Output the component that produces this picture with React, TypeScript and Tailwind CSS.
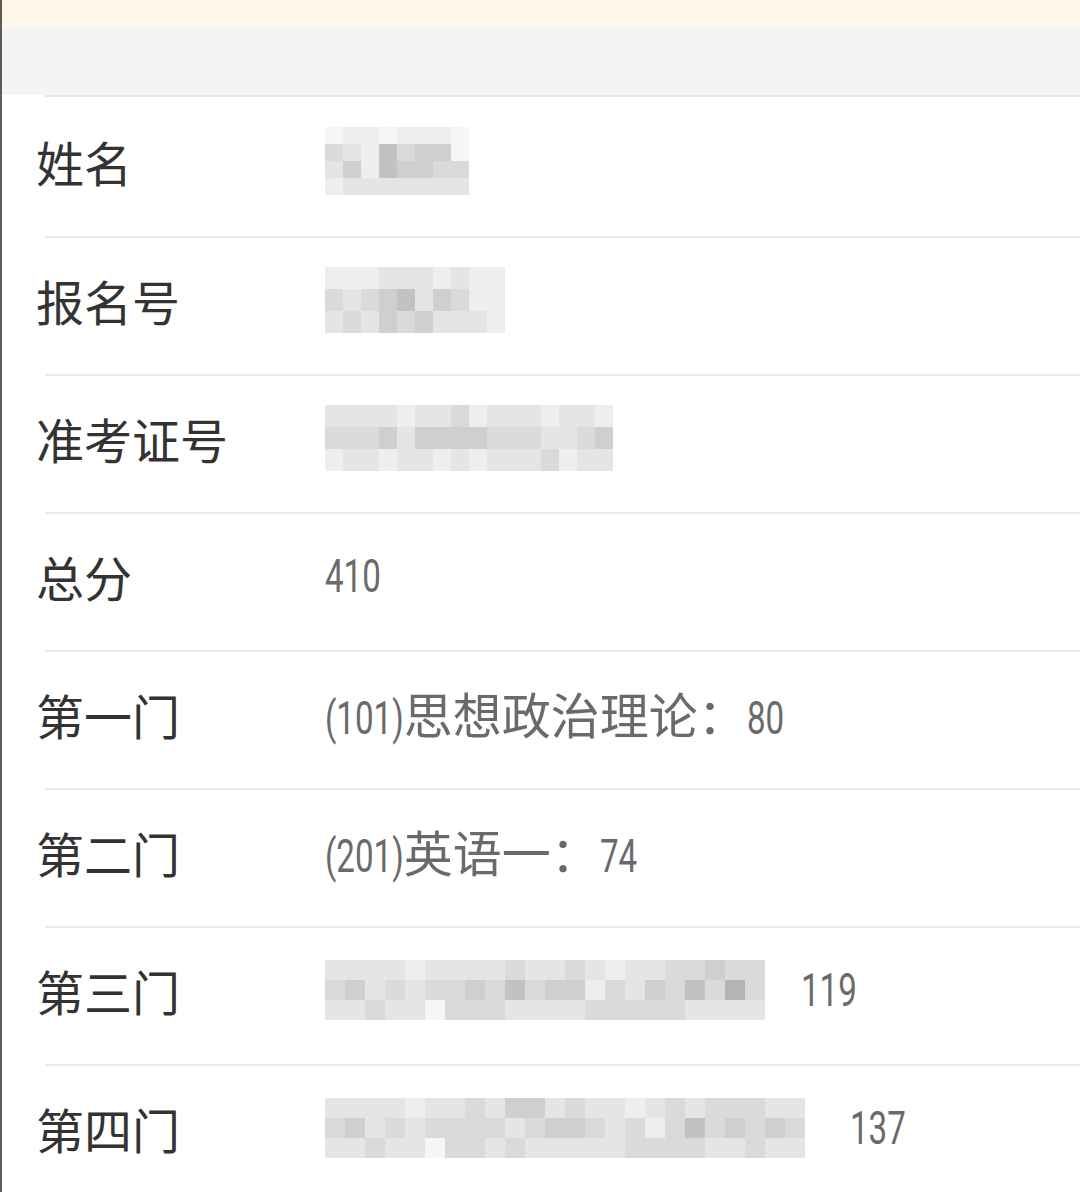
import React from "react";

const SHADES = ["#f6f6f6", "#eeeeee", "#e5e5e5", "#dadada", "#cfcfcf", "#c2c2c2", "#b4b4b4"];

// Roboto advance widths (em) for the ascii glyphs we need
const ADV: Record<string, number> = { "(": 0.342, ")": 0.348 };
const SIZE = 46;
const SQUEEZE = 0.72;

// pixelated (mosaic) blur covering a private value
function Mosaic({ rows, cw, ch }: { rows: string[]; cw: number; ch: number }) {
  return (
    <div className="flex flex-col shrink-0">
      {rows.map((r, i) => (
        <div key={i} className="flex">
          {r.split("").map((c, j) => (
            <div key={j} style={{ width: cw, height: ch, background: SHADES[Number(c)] }} />
          ))}
        </div>
      ))}
    </div>
  );
}

// digits in the screenshot use a condensed face; squeeze Roboto to match
function Narrow({ text, className = "" }: { text: string; className?: string }) {
  const w = text.split("").reduce((s, c) => s + (ADV[c] ?? 0.5615), 0) * SIZE;
  return (
    <span
      className={`inline-block origin-left scale-x-[0.72] font-['Roboto',sans-serif] text-[46px] ${className}`}
      style={{ marginRight: -w * (1 - SQUEEZE) }}
    >
      {text}
    </span>
  );
}

function Value({ text }: { text: string }) {
  const parts = text.match(/[\x00-\x7f]+|[^\x00-\x7f]+/g) || [];
  return (
    <span className="flex items-baseline">
      {parts.map((p, i) =>
        /^[\x00-\x7f]+$/.test(p) ? (
          <Narrow key={i} text={p} />
        ) : (
          <span key={i} className="text-[49px]">
            {p}
          </span>
        )
      )}
    </span>
  );
}

type Row = { label: string; text?: string; mosaic?: { rows: string[]; cw: number; ch: number }; tail?: string; gap?: string };

const ROWS: Row[] = [
  { label: "姓名", mosaic: { cw: 18, ch: 17, rows: ["01101110", "32153440", "24154433", "12222222"] } },
  { label: "报名号", mosaic: { cw: 18, ch: 22, rows: ["1112221211", "3234524311", "2324342221"] } },
  { label: "准考证号", mosaic: { cw: 18, ch: 22, rows: ["2222122312221221", "3334244443332234", "1221221212223122"] } },
  { label: "总分", text: "410" },
  { label: "第一门", text: "(101)思想政治理论：80" },
  { label: "第二门", text: "(201)英语一：74" },
  {
    label: "第三门",
    tail: "119",
    gap: "ml-[36px]",
    mosaic: { cw: 20, ch: 20, rows: ["2222122223223212233433", "3423233435344132435363", "2232203332222333332222"] },
  },
  {
    label: "第四门",
    tail: "137",
    gap: "ml-[45px]",
    mosaic: { cw: 20, ch: 20, rows: ["222212232442322123233322", "342323333234432313534343", "223220332322222333322322"] },
  },
];

export default function App() {
  return (
    <div className="min-h-screen w-full overflow-hidden bg-white border-l-[2px] border-[#5c5c5c] flex flex-col font-['Noto_Sans_CJK_SC','Noto_Sans',sans-serif]">
      <div className="h-[28px] bg-[#fff7ea]" />
      <div className="h-[67px] bg-[#f4f4f4]" />

      <div className="flex flex-col">
        {ROWS.map((r, i) => (
          <div key={r.label}>
            <div className="ml-[43px] h-[2px] bg-[#e8e8e8]" />
            <div className={`flex items-center pl-[34px] pb-[12px] ${i === 0 ? "h-[139px]" : "h-[136px]"}`}>
              <div className="w-[289px] shrink-0 text-[48px] leading-none text-[#333333]">{r.label}</div>
              <div className="flex items-center text-[48px] leading-none text-[#6a6a6a]">
                {r.mosaic && <Mosaic {...r.mosaic} />}
                {r.text && <Value text={r.text} />}
                {r.tail && <Narrow text={r.tail} className={r.gap} />}
              </div>
            </div>
          </div>
        ))}
      </div>
    </div>
  );
}
